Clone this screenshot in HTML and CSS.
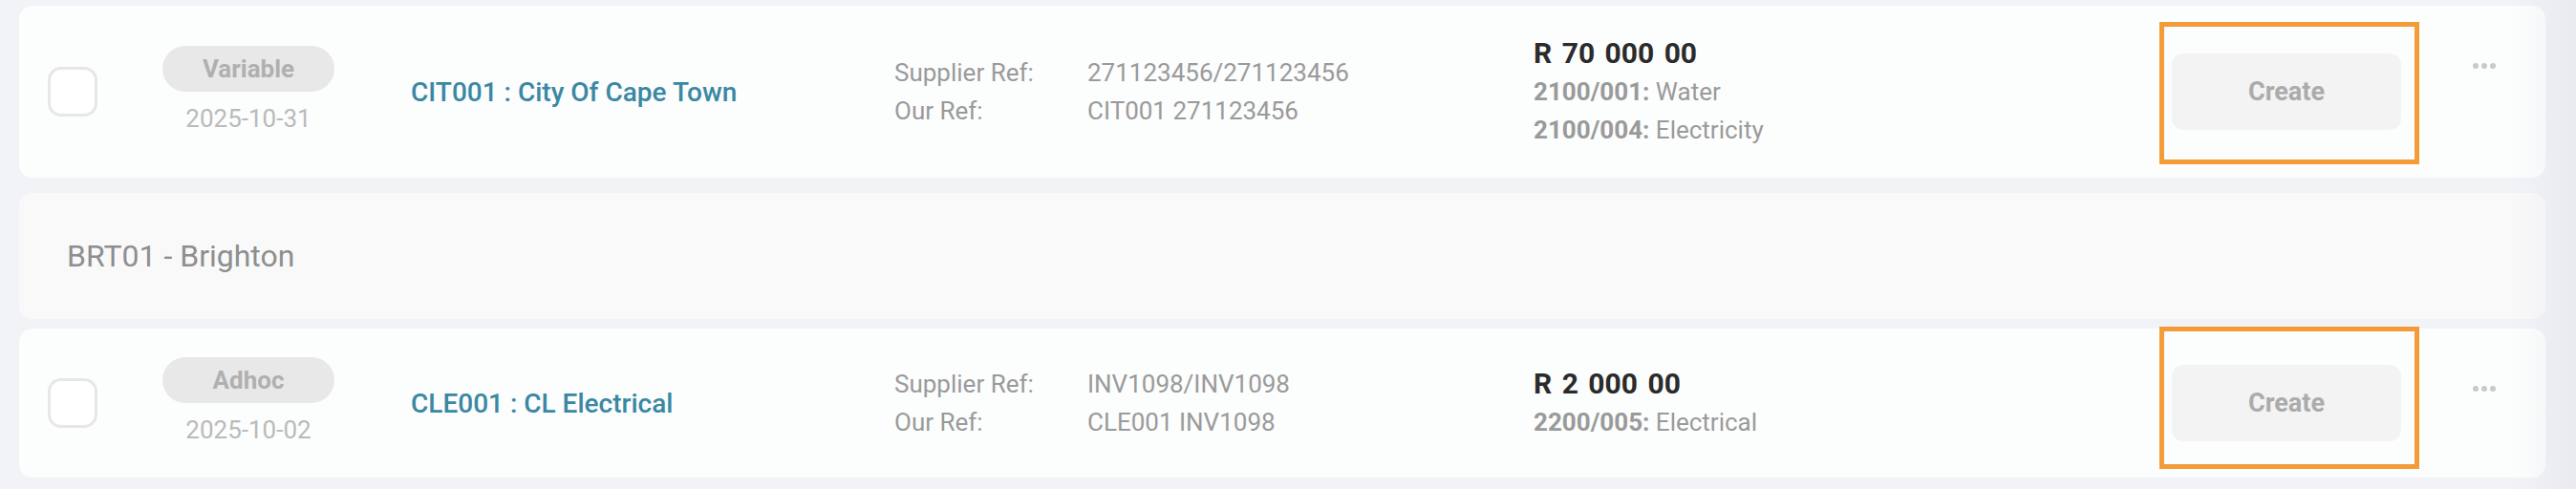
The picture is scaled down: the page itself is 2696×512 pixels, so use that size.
FILE: index.html
```html
<html>
    <head>
        <link rel="stylesheet" href="styles.css">
        <meta name="viewport" content="width=device-width, initial-scale=1.0">
        <title>Payments</title>
    </head>
    <body>
        <div class="list">
            <div class="row">
                <span class="check"></span>
                <div class="meta">
                    <span class="badge">Variable</span>
                    <span class="date">2025-10-31</span>
                </div>
                <a class="name" href="#">CIT001 : City Of Cape Town</a>
                <div class="refs">
                    <span>Supplier Ref:</span><span>271123456/271123456</span>
                    <span>Our Ref:</span><span>CIT001 271123456</span>
                </div>
                <div class="amount">
                    <div class="total">R 70 000 00</div>
                    <div class="line"><b>2100/001:</b> Water</div>
                    <div class="line"><b>2100/004:</b> Electricity</div>
                </div>
                <div class="action">
                    <button class="create">Create</button>
                    <span class="highlight"></span>
                </div>
                <div class="more"><i></i><i></i><i></i></div>
            </div>

            <div class="group">BRT01 - Brighton</div>

            <div class="row row-low">
                <span class="check"></span>
                <div class="meta">
                    <span class="badge">Adhoc</span>
                    <span class="date">2025-10-02</span>
                </div>
                <a class="name" href="#">CLE001 : CL Electrical</a>
                <div class="refs">
                    <span>Supplier Ref:</span><span>INV1098/INV1098</span>
                    <span>Our Ref:</span><span>CLE001 INV1098</span>
                </div>
                <div class="amount">
                    <div class="total">R 2 000 00</div>
                    <div class="line"><b>2200/005:</b> Electrical</div>
                </div>
                <div class="action">
                    <button class="create">Create</button>
                    <span class="highlight"></span>
                </div>
                <div class="more"><i></i><i></i><i></i></div>
            </div>
        </div>
    </body>
</html>
```

FILE: styles.css
```css
html, body {margin: 0; padding: 0;}
body {
    font-family: Roboto, "Liberation Sans", sans-serif;
    background: #f2f3f7;
    width: 2696px;
    height: 512px;
    overflow: hidden;
    position: relative;
}
/* soft shade along the right edge */
body:after {
    content: "";
    position: absolute;
    top: 0;
    right: 0;
    width: 70px;
    height: 100%;
    background: linear-gradient(to right, rgba(40,50,90,0), rgba(40,50,90,0.045));
    pointer-events: none;
}
.list {padding: 6px 32px 0 20px;}

.row {
    display: flex;
    align-items: center;
    background: #fcfdfd;
    border-radius: 14px;
    padding: 30px 52px 30px 30px;
    margin-bottom: 16px;
}
.group {
    display: flex;
    align-items: center;
    height: 132px;
    padding-left: 50px;
    background: #f9f9fa;
    border-radius: 14px;
    margin-bottom: 10px;
    font-size: 32px;
    color: #8e8e8e;
}

.check {
    flex-shrink: 0;
    box-sizing: border-box;
    width: 52px;
    height: 52px;
    border: 3px solid #e7e7e7;
    border-radius: 14px;
    background: #fff;
    margin-right: 68px;
}
.meta {
    flex-shrink: 0;
    width: 180px;
    margin-right: 80px;
    display: flex;
    flex-direction: column;
    align-items: center;
}
.badge {
    width: 180px;
    height: 48px;
    line-height: 48px;
    border-radius: 24px;
    background: #e8e8e8;
    color: #b0b0b0;
    font-size: 26px;
    font-weight: bold;
    text-align: center;
    margin-bottom: 8px;
}
.date {font-size: 26px; line-height: 40px; color: #bababa;}

.name {
    flex-shrink: 0;
    width: 506px;
    font-size: 28px;
    font-weight: 500;
    color: #3a88a4;
    text-decoration: none;
}
.refs {
    flex-shrink: 0;
    width: 669px;
    display: grid;
    grid-template-columns: 202px auto;
    font-size: 26px;
    line-height: 40px;
    color: #9a9a9a;
}
.amount {flex: 1; line-height: 40px;}
.amount .total {font-size: 30px; font-weight: bold; color: #2b2b2b; word-spacing: 3px;}
.amount .line {font-size: 26px; color: #9a9a9a;}

.action {
    position: relative;
    flex-shrink: 0;
    width: 272px;
    display: flex;
    padding-left: 13px;
    box-sizing: border-box;
}
.create {
    width: 240px;
    height: 80px;
    border: none;
    border-radius: 12px;
    background: #f3f3f3;
    color: #ababab;
    font-family: inherit;
    font-size: 27px;
    font-weight: bold;
}
.highlight {
    position: absolute;
    left: 0;
    top: -33px;
    width: 272px;
    height: 149px;
    box-sizing: border-box;
    border: 5px solid #f39b38;
    pointer-events: none;
}
.row-low .highlight {top: -40px;}

.more {
    align-self: flex-start;
    height: 66px;
    display: flex;
    align-items: center;
    gap: 3px;
    padding-left: 56px;
}
.more i {
    width: 6px;
    height: 6px;
    border-radius: 50%;
    background: #c9c9c9;
}
```
